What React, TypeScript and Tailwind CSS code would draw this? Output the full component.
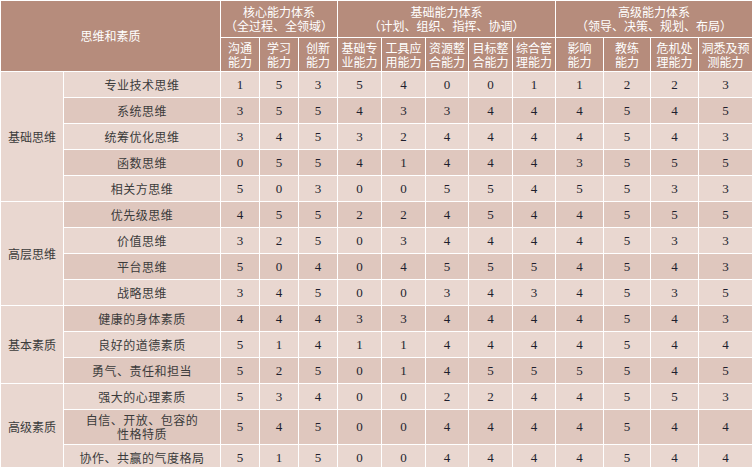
import React from "react";

const cjk = "font-['Noto_Sans_CJK_SC',sans-serif]";
const serif = "font-['Liberation_Serif','Noto_Sans_CJK_SC',serif]";

const widths = [63, 157, 39, 39, 39, 44, 44, 43, 44, 43, 48, 47, 48, 54];

const groups = [
  { title: "核心能力体系", sub: "（全过程、全领域）", span: 3 },
  { title: "基础能力体系", sub: "（计划、组织、指挥、协调）", span: 5 },
  { title: "高级能力体系", sub: "（领导、决策、规划、布局）", span: 4 },
];

const abilities = [
  ["沟通", "能力"],
  ["学习", "能力"],
  ["创新", "能力"],
  ["基础专", "业能力"],
  ["工具应", "用能力"],
  ["资源整", "合能力"],
  ["目标整", "合能力"],
  ["综合管", "理能力"],
  ["影响", "能力"],
  ["教练", "能力"],
  ["危机处", "理能力"],
  ["洞悉及预", "测能力"],
];

type Row = { name: string[]; v: number[] };

const sections: { label: string; rows: Row[] }[] = [
  {
    label: "基础思维",
    rows: [
      { name: ["专业技术思维"], v: [1, 5, 3, 5, 4, 0, 0, 1, 1, 2, 2, 3] },
      { name: ["系统思维"], v: [3, 5, 5, 4, 3, 3, 4, 4, 4, 5, 4, 5] },
      { name: ["统筹优化思维"], v: [3, 4, 5, 3, 2, 4, 4, 4, 4, 5, 4, 3] },
      { name: ["函数思维"], v: [0, 5, 5, 4, 1, 4, 4, 4, 3, 5, 5, 5] },
      { name: ["相关方思维"], v: [5, 0, 3, 0, 0, 5, 5, 4, 5, 5, 3, 3] },
    ],
  },
  {
    label: "高层思维",
    rows: [
      { name: ["优先级思维"], v: [4, 5, 5, 2, 2, 4, 5, 4, 4, 5, 5, 5] },
      { name: ["价值思维"], v: [3, 2, 5, 0, 3, 4, 4, 4, 4, 5, 3, 3] },
      { name: ["平台思维"], v: [5, 0, 4, 0, 4, 5, 5, 5, 4, 5, 4, 3] },
      { name: ["战略思维"], v: [3, 4, 5, 0, 0, 3, 4, 3, 4, 5, 3, 5] },
    ],
  },
  {
    label: "基本素质",
    rows: [
      { name: ["健康的身体素质"], v: [4, 4, 4, 3, 3, 4, 4, 4, 4, 5, 4, 3] },
      { name: ["良好的道德素质"], v: [5, 1, 4, 1, 1, 4, 4, 4, 4, 5, 4, 4] },
      { name: ["勇气、责任和担当"], v: [5, 2, 5, 0, 1, 4, 5, 5, 5, 5, 4, 5] },
    ],
  },
  {
    label: "高级素质",
    rows: [
      { name: ["强大的心理素质"], v: [5, 3, 4, 0, 0, 2, 2, 4, 4, 5, 5, 3] },
      { name: ["自信、开放、包容的", "性格特质"], v: [5, 4, 5, 0, 0, 4, 4, 4, 4, 5, 4, 4] },
      { name: ["协作、共赢的气度格局"], v: [5, 1, 5, 0, 0, 4, 4, 4, 4, 5, 4, 4] },
    ],
  },
];

export default function App() {
  let idx = 0;
  return (
    <div className="w-[752px] h-[467px] overflow-hidden bg-white">
      <table className="w-[752px] table-fixed border-collapse">
        <colgroup>
          {widths.map((w, i) => (
            <col key={i} style={{ width: w }} />
          ))}
        </colgroup>
        <thead className={`${cjk} text-white text-[12px] leading-[14px]`}>
          <tr className="h-[37px] bg-[#b68c7c]">
            <th colSpan={2} rowSpan={2} className="border border-white font-normal">
              思维和素质
            </th>
            {groups.map((g) => (
              <th key={g.title} colSpan={g.span} className="border border-white font-normal p-0">
                <div>{g.title}</div>
                <div>{g.sub}</div>
              </th>
            ))}
          </tr>
          <tr className="h-[34px] bg-[#b68c7c]">
            {abilities.map((a, i) => (
              <th key={i} className="border border-white font-normal p-0">
                <div>{a[0]}</div>
                <div>{a[1]}</div>
              </th>
            ))}
          </tr>
        </thead>
        <tbody className="text-[12px]">
          {sections.map((s) =>
            s.rows.map((r, ri) => {
              idx += 1;
              const bg = idx % 2 === 0 ? "bg-[#dfc7be]" : "bg-[#e9d7d0]";
              const tall = r.name.length > 1;
              return (
                <tr key={r.name.join("")} className={tall ? "h-[35px]" : "h-[26px]"}>
                  {ri === 0 && (
                    <td
                      rowSpan={s.rows.length}
                      className={`${cjk} border border-white bg-[#e9d7d0] text-center text-[#3b3b3b] p-0`}
                    >
                      {s.label}
                    </td>
                  )}
                  <td className={`${cjk} ${bg} border border-white text-center text-[#3b3b3b] p-0 leading-[14px] tracking-[0.5px]`}>
                    {r.name.map((n) => (
                      <div key={n}>{n}</div>
                    ))}
                  </td>
                  {r.v.map((v, i) => (
                    <td
                      key={i}
                      className={`${serif} ${bg} border border-white text-center text-[13px] text-[#1e1f2e] p-0`}
                    >
                      {v}
                    </td>
                  ))}
                </tr>
              );
            })
          )}
        </tbody>
      </table>
    </div>
  );
}
